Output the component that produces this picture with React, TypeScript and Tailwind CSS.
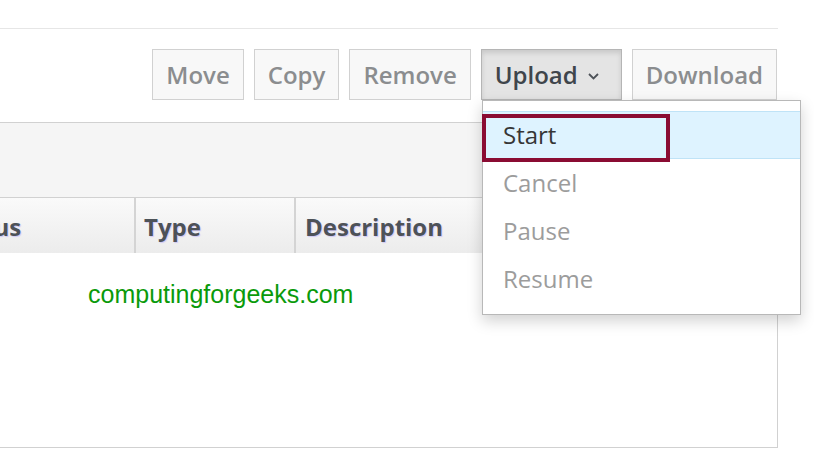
import React from "react";

const btn =
  "h-[51px] px-[13px] border border-[#d1d1d1] bg-[#f8f8f8] text-[24px] font-semibold text-[#8b8d8f] leading-none flex items-center";

export default function App() {
  return (
    <div
      className="relative w-[814px] h-[452px] bg-white overflow-hidden"
      style={{ fontFamily: '"Open Sans", "Noto Sans", sans-serif' }}
    >
      <div className="w-[778px] pt-[28px]">
        <div className="h-px bg-[#e6e6e6]" />
        <div className="flex justify-end gap-[10px] pt-[20px] pr-px">
          <div className={btn}>Move</div>
          <div className={btn}>Copy</div>
          <div className={btn}>Remove</div>
          <div className="h-[51px] w-[141px] px-[13px] border border-[#b5b5b5] bg-[#e4e4e4] shadow-[inset_0_3px_5px_rgba(0,0,0,0.12)] text-[24px] font-semibold text-[#3f454b] leading-none flex items-center gap-[10px]">
            <span>Upload</span>
            <svg width="11" height="7" viewBox="0 0 11 7" className="mt-[3px]">
              <path d="M1 1 L5.5 5.5 L10 1" fill="none" stroke="#4d5258" strokeWidth="1.8" />
            </svg>
          </div>
          <div className={btn}>Download</div>
        </div>
        <div className="mt-[22px] border-t border-r border-b border-[#d1d1d1] h-[326px] flex flex-col">
          <div className="h-[75px] bg-[#f5f5f5] border-b border-[#d1d1d1]" />
          <div className="h-[55px] flex bg-gradient-to-b from-[#fafafa] to-[#ececec] text-[24px] font-bold text-[#4d5258] [text-shadow:1px_1px_1px_#cfc8f5]">
            <div className="w-[136px] border-r-2 border-[#d4d4d4] overflow-hidden flex items-center pt-[2px]">
              <span className="ml-[-55px]">Status</span>
            </div>
            <div className="w-[160px] border-r-2 border-[#d4d4d4] flex items-center pl-[8px] pt-[2px]">Type</div>
            <div className="flex-1 flex items-center pl-[9px] pt-[2px]">Description</div>
          </div>
          <div className="flex-1 bg-white pt-[29px] pl-[88px]">
            <span
              className="text-[25px] text-[#0a9a0a] leading-none"
              style={{ fontFamily: '"Liberation Sans", Arial, sans-serif' }}
            >
              computingforgeeks.com
            </span>
          </div>
        </div>
      </div>

      <div className="absolute left-[482px] top-[100px] w-[319px] h-[215px] bg-white border border-[#b8b8b8] shadow-[0_6px_14px_rgba(0,0,0,0.18)] pt-[10px] text-[24px] text-[#9c9c9c]">
        <div className="h-[48px] bg-[#def3ff] border-y border-[#bfe3f7] flex items-center pl-[20px] text-[#363636]">
          Start
        </div>
        <div className="h-[48px] flex items-center pl-[20px]">Cancel</div>
        <div className="h-[48px] flex items-center pl-[20px]">Pause</div>
        <div className="h-[48px] flex items-center pl-[20px]">Resume</div>
      </div>
      <div className="absolute left-[482px] top-[114px] w-[188px] h-[48px] border-[4px] border-[#8a0c33]" />
    </div>
  );
}
